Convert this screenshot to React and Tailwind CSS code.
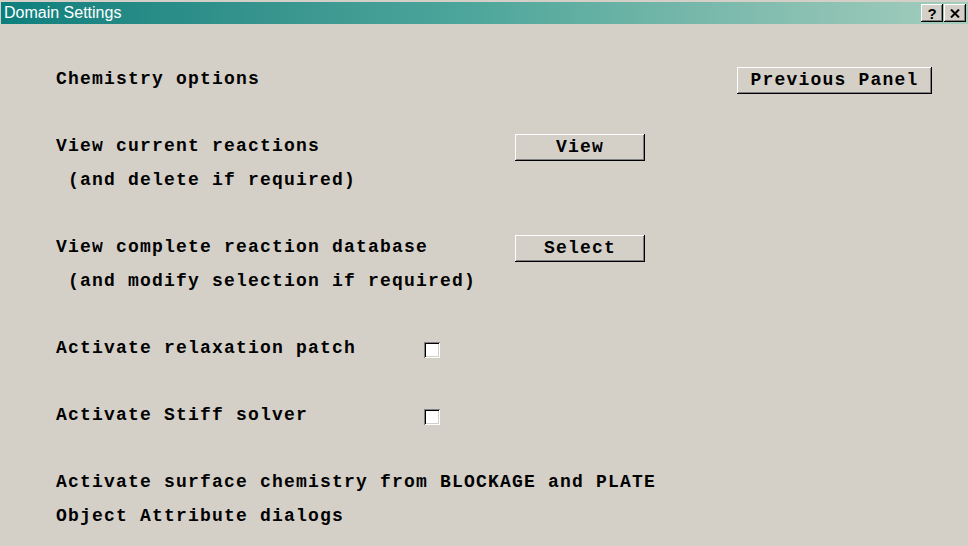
import React from 'react';

const mono = "font-['Liberation_Mono',monospace] font-bold text-[18px] tracking-[1.2px] text-black whitespace-pre";
const raised =
  'bg-[#d4d0c8] shadow-[inset_-1px_-1px_#000,inset_1px_1px_#fff,inset_-2px_-2px_#808080,inset_2px_2px_#d4d0c8]';

function Row({ children }) {
  return <div className="h-[33.6px] flex items-center pl-[55px]">{children}</div>;
}

function Btn({ className, children }) {
  return (
    <button className={`${raised} ${mono} h-[27px] mt-[2px] flex items-center justify-center ${className}`}>
      {children}
    </button>
  );
}

function Check() {
  return (
    <span className="mt-[2px] w-[16px] h-[16px] bg-white shadow-[inset_1px_1px_#808080,inset_-1px_-1px_#fff,inset_2px_2px_#000,inset_-2px_-2px_#d4d0c8]" />
  );
}

function TitleButton({ children }) {
  return (
    <button className={`${raised} w-[22px] h-[18px] flex items-center justify-center`}>{children}</button>
  );
}

export default function App() {
  return (
    <div className="w-[968px] h-[546px] bg-[#d4d0c8] overflow-hidden pt-[2px] pl-[1px]">
      <div className="h-[22px] bg-gradient-to-r from-[#0b7f7d] via-[#4fa79c] to-[#a4cdbd] flex items-center">
        <span className="pl-[3px] text-white text-[16px] font-['Liberation_Sans',Arial,sans-serif] leading-none">
          Domain Settings
        </span>
        <div className="ml-auto mr-[2px] flex gap-[1px]">
          <TitleButton>
            <span className="font-['Liberation_Sans',Arial,sans-serif] font-bold text-[15px] leading-none text-black">?</span>
          </TitleButton>
          <TitleButton>
            <svg width="10" height="9" viewBox="0 0 10 9">
              <path d="M1 0.5 L9 8.5 M9 0.5 L1 8.5" stroke="#000" strokeWidth="2" />
            </svg>
          </TitleButton>
        </div>
      </div>

      <div className="pt-[39px]">
        <Row>
          <span className={mono}>Chemistry options</span>
          <Btn className="ml-auto mr-[36px] w-[195px]">Previous Panel</Btn>
        </Row>
        <Row />
        <Row>
          <span className={`${mono} w-[459px]`}>View current reactions</span>
          <Btn className="w-[130px]">View</Btn>
        </Row>
        <Row>
          <span className={mono}> (and delete if required)</span>
        </Row>
        <Row />
        <Row>
          <span className={`${mono} w-[459px]`}>View complete reaction database</span>
          <Btn className="w-[130px]">Select</Btn>
        </Row>
        <Row>
          <span className={mono}> (and modify selection if required)</span>
        </Row>
        <Row />
        <Row>
          <span className={`${mono} w-[368px]`}>Activate relaxation patch</span>
          <Check />
        </Row>
        <Row />
        <Row>
          <span className={`${mono} w-[368px]`}>Activate Stiff solver</span>
          <Check />
        </Row>
        <Row />
        <Row>
          <span className={mono}>Activate surface chemistry from BLOCKAGE and PLATE</span>
        </Row>
        <Row>
          <span className={mono}>Object Attribute dialogs</span>
        </Row>
      </div>
    </div>
  );
}
